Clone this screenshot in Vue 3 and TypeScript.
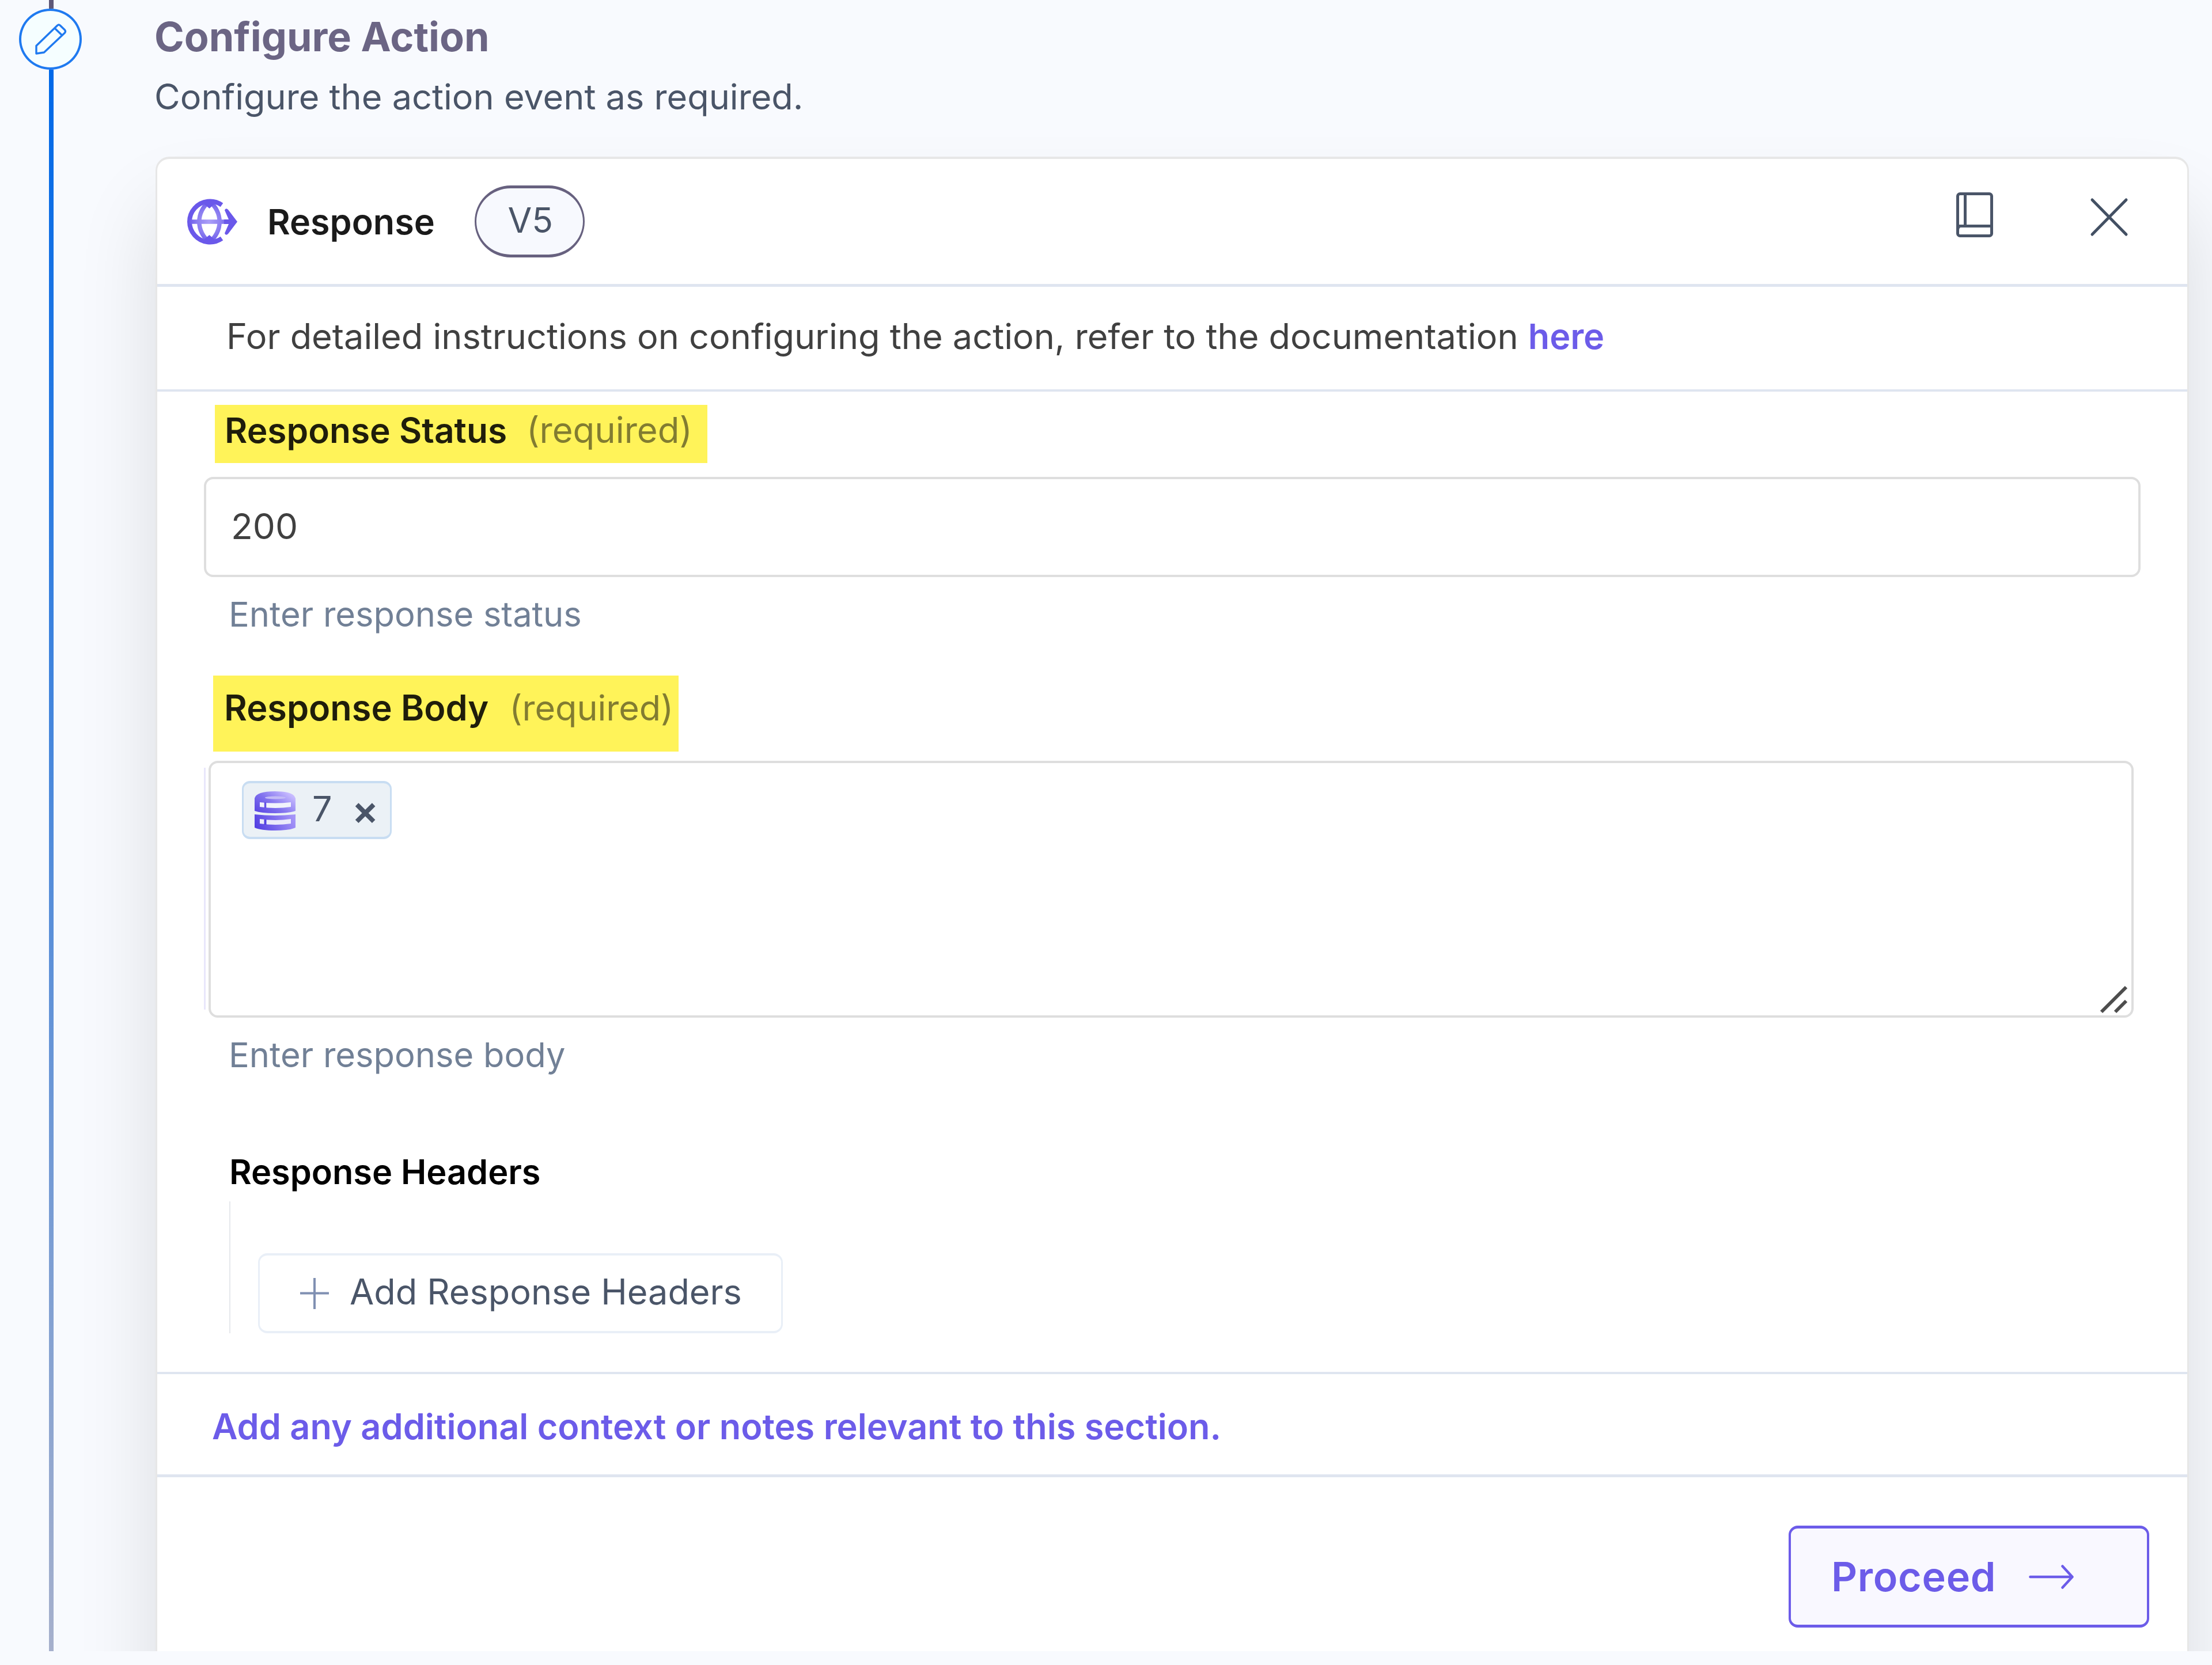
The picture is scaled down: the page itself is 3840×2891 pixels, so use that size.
<script setup lang="ts">
import { ref } from 'vue'

interface Chip {
  id: number
  label: string
}

const status = ref('200')
const chips = ref<Chip[]>([{ id: 1, label: '7' }])

function removeChip(id: number): void {
  chips.value = chips.value.filter((chip) => chip.id !== id)
}
</script>

<template>
  <main class="page">
    <div class="viewport">
      <aside class="rail">
        <div class="rail-line rail-line-before"></div>
        <div class="step">
          <svg class="pencil" viewBox="0 0 54 54" fill="none" stroke="#1f7af0" stroke-width="3.4" stroke-linejoin="round">
            <path d="M2 52V38.500L38.500 3.200Q41 1 43.500 3.200L51.500 11Q53.500 13.500 51.500 16L15.500 50Z" />
            <path d="M34.500 8.500L46.500 20" />
          </svg>
        </div>
        <div class="rail-line rail-line-after"></div>
      </aside>

      <section class="content">
        <h1 class="title">Configure Action</h1>
        <p class="subtitle">Configure the action event as required.</p>

        <article class="card">
          <header class="card-head">
            <svg class="globe" viewBox="0 0 89 78" fill="none">
              <defs>
                <radialGradient id="globe-ink" gradientUnits="userSpaceOnUse" cx="40" cy="39" r="40">
                  <stop offset="0" stop-color="#ab9ff8" />
                  <stop offset="0.55" stop-color="#8a7cf0" />
                  <stop offset="0.9" stop-color="#6a58ea" />
                </radialGradient>
              </defs>
              <g stroke="url(#globe-ink)">
                <path d="M62 10A35.500 35.500 0 1 0 62 68" stroke="#6a58ea" stroke-width="8" />
                <path d="M40.500 3C17 24 17 54 40.500 75" stroke-width="7.500" />
                <path d="M40.500 3C64 24 64 54 40.500 75" stroke-width="7.500" />
                <path d="M4 39.010L76 39" stroke-width="7.500" />
              </g>
              <path d="M26 4Q40 -2 54 4L40.500 16ZM26 74Q40 80 54 74L40.500 62Z" fill="#6a58ea" />
              <path d="M67 19Q69 14 73 18L89 39L73 60Q69 64 67 59L74 43H66V35H74Z" fill="#6a58ea" />
            </svg>
            <h2 class="card-title">Response</h2>
            <span class="version">V5</span>
            <div class="head-actions">
              <svg class="book" viewBox="0 0 64 78" fill="none" stroke="#4a5568" stroke-width="5">
                <rect x="2.500" y="2.500" width="59" height="73" rx="4" />
                <path d="M15.500 3V58M5 58.500H61" />
                <path d="M3 66Q3 58.500 9 58.500" stroke-width="4" />
              </svg>
              <svg class="close" viewBox="0 0 65 66" fill="none" stroke="#435063" stroke-width="5" stroke-linecap="round">
                <path d="M3 3L62 63M62 3L3 63" />
              </svg>
            </div>
          </header>

          <div class="docs">
            <p>For detailed instructions on configuring the action, refer to the documentation <a class="link">here</a></p>
          </div>

          <div class="form">
            <div class="label label-status">
              <strong>Response Status</strong>
              <span>(required)</span>
            </div>
            <div class="input">{{ status }}</div>
            <p class="hint">Enter response status</p>

            <div class="label label-body">
              <strong>Response Body</strong>
              <span>(required)</span>
            </div>
            <div class="editor-row">
              <div class="editor-guide"></div>
              <div class="editor">
                <span v-for="chip in chips" :key="chip.id" class="chip">
                  <svg class="database" viewBox="0 0 71 68">
                    <defs>
                      <linearGradient id="disk-top" x1="0" y1="1" x2="1" y2="0.3">
                        <stop offset="0" stop-color="#5642e2" />
                        <stop offset="0.5" stop-color="#8172ee" />
                        <stop offset="1" stop-color="#c8bcff" />
                      </linearGradient>
                      <linearGradient id="disk-low" x1="0" y1="0.6" x2="1" y2="0.4">
                        <stop offset="0" stop-color="#5340e2" />
                        <stop offset="1" stop-color="#a595f8" />
                      </linearGradient>
                    </defs>
                    <path d="M0 12Q3 0 35.500 0Q68 0 71 12V34Q60 38 35.500 38Q11 38 0 34Z" fill="url(#disk-top)" />
                    <ellipse cx="36" cy="11" rx="18" ry="2.500" fill="#c3bbf6" />
                    <path d="M9 19Q36 22 63 19V27Q36 31 9 27Z" fill="#f1f3fb" />
                    <path d="M18.500 19V29" stroke="#6552e6" stroke-width="3.500" />
                    <path d="M0 40Q36 44 71 40V63Q60 68 35.500 68Q11 68 0 63Z" fill="url(#disk-low)" />
                    <path d="M9 48Q36 52 63 48V56Q36 60 9 56Z" fill="#ebebfa" />
                    <path d="M18.500 49V58" stroke="#5340e2" stroke-width="4" />
                  </svg>
                  <span class="chip-label">{{ chip.label }}</span>
                  <span class="chip-remove" @click="removeChip(chip.id)">×</span>
                </span>
                <svg class="grip" viewBox="0 0 48 48" fill="none" stroke="#4d4d4d" stroke-width="6">
                  <path d="M2 45L45 2M26 45L45 26" />
                </svg>
              </div>
            </div>
            <p class="hint">Enter response body</p>

            <h3 class="headers-title">Response Headers</h3>
            <div class="headers-group">
              <button class="add" type="button">
                <svg class="plus" viewBox="0 0 50 54" fill="none" stroke="#8090b2" stroke-width="4">
                  <path d="M25 0V54M0 26.500H50" />
                </svg>
                <span>Add Response Headers</span>
              </button>
            </div>
          </div>

          <div class="notes">Add any additional context or notes relevant to this section.</div>

          <footer class="card-foot">
            <button class="proceed" type="button">
              <span>Proceed</span>
              <svg class="arrow" viewBox="0 0 78 42" fill="none" stroke="#6c5ce9" stroke-width="4.500" stroke-linecap="round" stroke-linejoin="round">
                <path d="M2.500 21H75M58.500 2.500L75.500 21L58.500 39.500" />
              </svg>
            </button>
          </footer>
        </article>
      </section>
    </div>
  </main>
</template>

<style>
body {
  background: #f8fafe;
}
</style>

<style scoped>
.page {
  width: 3840px;
  height: 2891px;
  overflow: hidden;
  background: #f8fafe;
  font-family: Inter, "Liberation Sans", sans-serif;
  font-size: 61px;
  line-height: 80px;
  color: #4a5568;
}

.page * {
  box-sizing: border-box;
}

h1,
h2,
h3,
p {
  margin: 0;
  font-size: inherit;
}

button {
  font: inherit;
  color: inherit;
  padding: 0;
}

svg {
  display: block;
  flex: none;
  overflow: visible;
}

.viewport {
  display: flex;
  height: 2867px;
  overflow: hidden;
}

/* Stepper rail */
.rail {
  flex: none;
  display: flex;
  flex-direction: column;
  width: 267px;
  z-index: 1;
}

.rail-line {
  width: 8px;
  margin-left: 85px;
}

.rail-line-before {
  height: 15px;
  background: #5f5878;
}

.rail-line-after {
  flex: 1;
  background: linear-gradient(#0068e8, #a6b0cc);
}

.step {
  display: flex;
  align-items: center;
  justify-content: center;
  width: 109px;
  height: 106px;
  margin-left: 33px;
  border: 4px solid #1f7af0;
  border-radius: 50%;
  background: #f5feff;
}

.pencil {
  width: 54px;
  height: 54px;
}

/* Content */
.content {
  flex: none;
  width: 3533px;
  padding-top: 19px;
}

.title {
  margin-left: 1px;
  font-size: 70px;
  line-height: 90px;
  font-weight: 700;
  color: #6b6584;
}

.subtitle {
  margin: 19px 0 0 1px;
  font-size: 61.2px;
}

.card {
  margin: 64px 0 0 3px;
  height: 2900px;
  border: 4px solid #e7e7e7;
  border-width: 4px 3px;
  border-radius: 24px;
  background: #fff;
  box-shadow: 0 90px 140px rgba(0, 0, 0, 0.12);
}

.card-head {
  display: flex;
  align-items: center;
  height: 222px;
  padding: 0 103px 0 50px;
  border-bottom: 5px solid #dfe5f0;
}

.globe {
  width: 89px;
  height: 78px;
}

.card-title {
  margin-left: 52px;
  font-weight: 600;
  color: #1a1a1a;
}

.version {
  display: flex;
  justify-content: center;
  width: 191px;
  height: 125px;
  margin-left: 69px;
  padding: 15px 0 0 3px;
  border: 4px solid #67617f;
  border-width: 5px 3px;
  border-radius: 63px;
  background: #f7f9fe;
  font-size: 60.5px;
}

.head-actions {
  display: flex;
  align-items: center;
  gap: 169px;
  margin-left: auto;
}

.book {
  width: 64px;
  height: 78px;
  margin-bottom: 23px;
}

.close {
  width: 65px;
  height: 66px;
  margin-bottom: 16px;
}

.docs {
  height: 182px;
  padding: 46px 0 0 120px;
  border-bottom: 4px solid #dfe5f0;
  font-size: 61.2px;
  color: #404040;
}

.link {
  font-size: 61px;
  font-weight: 600;
  color: #6c5ce9;
}

/* Form */
.form {
  height: 1702px;
  padding: 23px 81px 0;
}

.label {
  display: flex;
  align-items: flex-start;
  background: #fff359;
}

.label strong {
  font-weight: 600;
  color: #1f1d0b;
}

.label span {
  color: #827c31;
}

.label-status {
  gap: 34px;
  width: 855px;
  height: 101px;
  margin-left: 19px;
  padding: 4px 0 0 17px;
}

.label-status strong {
  font-size: 60.4px;
}

.label-status span {
  font-size: 61.6px;
}

.label-body {
  gap: 36px;
  width: 808px;
  height: 132px;
  margin: 67px 0 0 16px;
  padding: 16px 0 0 19px;
}

.label-body strong {
  font-size: 61.2px;
}

.input {
  width: 3362px;
  height: 174px;
  margin-top: 24px;
  padding: 42px 0 0 43px;
  border: 4px solid #dedede;
  border-radius: 16px;
  font-size: 62px;
  color: #404040;
}

.hint {
  margin: 24px 0 0 43px;
  font-size: 59.6px;
  color: #718096;
}

.editor-row {
  display: flex;
  gap: 5px;
  height: 446px;
  margin-top: 16px;
}

.editor-guide {
  width: 3px;
  margin: 12px 0 14px;
  background: #e9e7fb;
}

.editor {
  position: relative;
  width: 3342px;
  padding: 31px 54px;
  border: 4px solid #dedede;
  border-radius: 16px;
}

.chip {
  display: inline-flex;
  align-items: center;
  width: 260px;
  height: 101px;
  padding-left: 19px;
  border: 4px solid #c8ddf2;
  border-width: 4px 3px;
  border-radius: 14px;
  background: #ebf1f6;
}

.database {
  width: 71px;
  height: 68px;
  margin-top: 2px;
}

.chip-label {
  margin: 0 0 5px 29px;
}

.chip-remove {
  margin-left: 34px;
  font-size: 70px;
  font-weight: 600;
}

.grip {
  position: absolute;
  right: 6px;
  bottom: 3px;
  width: 48px;
  height: 48px;
}

.headers-title {
  margin: 123px 0 0 44px;
  font-size: 59.4px;
  font-weight: 600;
  color: #000;
}

.headers-group {
  display: flex;
  align-items: flex-end;
  height: 229px;
  margin: 12px 0 0 44px;
  padding-left: 48px;
  border-left: 2px solid #e6e8ec;
}

.add {
  display: flex;
  align-items: center;
  gap: 36px;
  width: 911px;
  height: 139px;
  padding-left: 70px;
  border: 4px solid #e9eff7;
  border-width: 4px 3px;
  border-radius: 16px;
  background: #fff;
  font-size: 61.2px;
}

.add span {
  margin-bottom: 5px;
}

.plus {
  width: 50px;
  height: 54px;
}

/* Notes and footer */
.notes {
  height: 183px;
  padding: 51px 0 0 95px;
  border-top: 4px solid #dfe5f0;
  border-bottom: 5px solid #dfe5f0;
  font-size: 61.2px;
  font-weight: 600;
  color: #6c5ce9;
}

.card-foot {
  display: flex;
  justify-content: flex-end;
  padding: 84px 66px 0 0;
}

.proceed {
  display: flex;
  align-items: center;
  gap: 57px;
  width: 626px;
  height: 177px;
  padding-left: 70px;
  border: 4px solid #6c5ce9;
  border-width: 5px 4px;
  border-radius: 16px;
  background: #f9f8ff;
  font-size: 70px;
  font-weight: 600;
  letter-spacing: 0.7px;
  color: #6c5ce9;
}

.arrow {
  width: 78px;
  height: 42px;
}
</style>
